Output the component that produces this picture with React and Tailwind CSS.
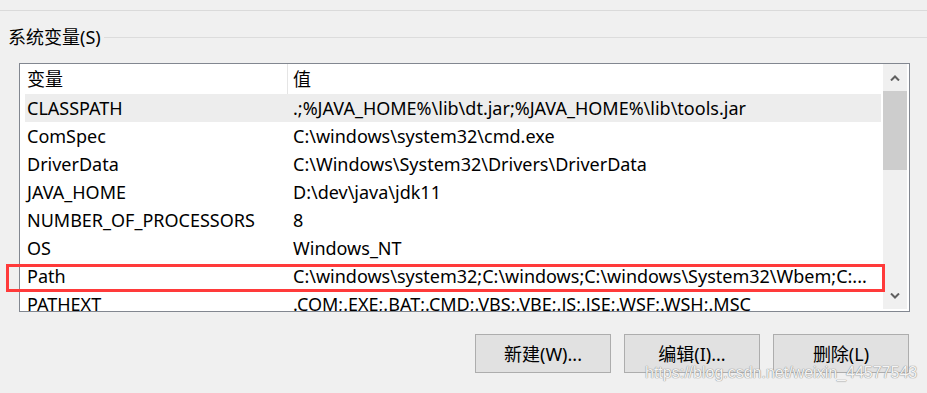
import React from 'react';

const rows = [
  ['CLASSPATH', '.;%JAVA_HOME%\\lib\\dt.jar;%JAVA_HOME%\\lib\\tools.jar'],
  ['ComSpec', 'C:\\windows\\system32\\cmd.exe'],
  ['DriverData', 'C:\\Windows\\System32\\Drivers\\DriverData'],
  ['JAVA_HOME', 'D:\\dev\\java\\jdk11'],
  ['NUMBER_OF_PROCESSORS', '8'],
  ['OS', 'Windows_NT'],
  ['Path', 'C:\\windows\\system32;C:\\windows;C:\\windows\\System32\\Wbem;C:...'],
  ['PATHEXT', ' .COM;.EXE;.BAT;.CMD;.VBS;.VBE;.JS;.JSE;.WSF;.WSH;.MSC'],
];

const font = { fontFamily: '"Noto Sans", "Noto Sans CJK SC", sans-serif' };

function Chevron({ up }) {
  return (
    <svg width="10" height="6" viewBox="0 0 10 6">
      <path
        d={up ? 'M1 5.5 L5 1.5 L9 5.5' : 'M1 0.5 L5 4.5 L9 0.5'}
        fill="none"
        stroke="#606060"
        strokeWidth="2"
      />
    </svg>
  );
}

export default function App() {
  return (
    <div
      className="relative w-[927px] h-[393px] overflow-hidden bg-[#f0f0f0] text-black"
      style={font}
    >
      {/* top separator */}
      <div className="h-[10px]" />
      <div className="h-px bg-[#dadada]" />

      {/* groupbox title */}
      <div className="mt-[11px] flex h-[30px] items-center pl-2">
        <span className="text-[18px] leading-none">系统变量(S)</span>
        <div className="ml-[3px] h-px flex-1 bg-[#dcdcdc]" />
      </div>

      {/* list */}
      <div className="ml-[19px] mt-[11px] flex h-[249px] w-[891px] border border-[#828790] bg-white">
        <div className="flex-1 overflow-hidden">
          <div className="flex h-[30px] items-center text-[18px] leading-none">
            <div className="w-[267px] pl-[7px]">变量</div>
            <div className="h-full w-px bg-[#e5e5e5]" />
            <div className="pl-[5px]">值</div>
          </div>
          {rows.map(([name, value], i) => (
            <div
              key={name}
              className={
                'ml-[5px] mr-[2px] flex h-[28px] shrink-0 items-center whitespace-nowrap text-[18px] leading-none ' +
                (i === 0 ? 'bg-[#ededed]' : '')
              }
            >
              <div className="w-[262px] pl-[2px]">{name}</div>
              <div className="pl-[6px]">{value}</div>
            </div>
          ))}
        </div>
        <div className="mb-[2px] mr-[2px] flex w-[24px] flex-col bg-[#f0f0f0]">
          <div className="flex h-[27px] items-center justify-center">
            <Chevron up />
          </div>
          <div className="h-[79px] bg-[#cdcdcd]" />
          <div className="flex-1" />
          <div className="flex h-[26px] items-center justify-center">
            <Chevron />
          </div>
        </div>
      </div>

      {/* buttons */}
      <div className="mt-[22px] flex justify-end gap-[13px] pr-[18px]">
        {['新建(W)...', '编辑(I)...', '删除(L)'].map((t) => (
          <button
            key={t}
            className="flex h-[39px] w-[136px] items-center justify-center border border-[#adadad] bg-[#e1e1e1] text-[18px] leading-none"
          >
            {t}
          </button>
        ))}
      </div>

      {/* highlight box */}
      <div className="absolute left-[6px] top-[264px] h-[28px] w-[879px] border-[3px] border-[#ff3a3a]" />

      {/* watermark */}
      <div
        className="absolute left-[645px] top-[365px] whitespace-nowrap text-[16px] leading-none text-[#f4f4f4] [text-shadow:0_0_1px_#8a8a8a,0_0_1px_#8a8a8a]"
        style={{ fontFamily: '"Liberation Sans", sans-serif' }}
      >
        https://blog.csdn.net/weixin_44577543
      </div>
    </div>
  );
}
